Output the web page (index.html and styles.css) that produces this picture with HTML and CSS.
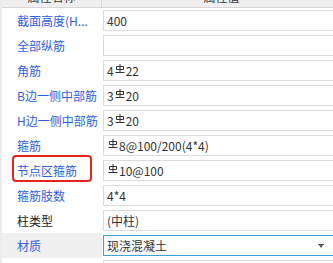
FILE: index.html
```html
<!DOCTYPE html>
<html>
<head>
  <title>柱属性</title>
  <link rel="stylesheet" href="styles.css">
</head>
<body>
  <div class="grid">
    <!-- header row, scrolled mostly out of view -->
    <div class="head">
      <div class="head-cell">属性名称</div>
      <div class="head-cell">属性值</div>
    </div>

    <div class="row">
      <div class="label">截面高度(H...</div>
      <div class="value"><div class="box">400</div></div>
    </div>
    <div class="row">
      <div class="label">全部纵筋</div>
      <div class="value"><div class="box"></div></div>
    </div>
    <div class="row">
      <div class="label">角筋</div>
      <div class="value"><div class="box">4<svg class="bar" viewBox="0 0 10 10"><path d="M5 0V8M1.5 2.5H8.5V5.5H1.5ZM0.5 8.5H9.5"/></svg>22</div></div>
    </div>
    <div class="row">
      <div class="label">B边一侧中部筋</div>
      <div class="value"><div class="box">3<svg class="bar" viewBox="0 0 10 10"><path d="M5 0V8M1.5 2.5H8.5V5.5H1.5ZM0.5 8.5H9.5"/></svg>20</div></div>
    </div>
    <div class="row">
      <div class="label">H边一侧中部筋</div>
      <div class="value"><div class="box">3<svg class="bar" viewBox="0 0 10 10"><path d="M5 0V8M1.5 2.5H8.5V5.5H1.5ZM0.5 8.5H9.5"/></svg>20</div></div>
    </div>
    <div class="row">
      <div class="label">箍筋</div>
      <div class="value"><div class="box"><svg class="bar" viewBox="0 0 10 10"><path d="M5 0V8M1.5 2.5H8.5V5.5H1.5ZM0.5 8.5H9.5"/></svg>8@100/200(4*4)</div></div>
    </div>
    <div class="row">
      <div class="label marked">节点区箍筋</div>
      <div class="value"><div class="box"><svg class="bar" viewBox="0 0 10 10"><path d="M5 0V8M1.5 2.5H8.5V5.5H1.5ZM0.5 8.5H9.5"/></svg>10@100</div></div>
    </div>
    <div class="row">
      <div class="label">箍筋肢数</div>
      <div class="value"><div class="box">4*4</div></div>
    </div>
    <div class="row">
      <div class="label plain">柱类型</div>
      <div class="value"><div class="box">(中柱)</div></div>
    </div>
    <div class="row selected">
      <div class="label">材质</div>
      <div class="value">
        <div class="box select">
          <span>现浇混凝土</span>
          <svg class="arrow" viewBox="0 0 6 4"><path d="M0 0H6V1H5L3 4L1 1H0Z"/></svg>
        </div>
      </div>
    </div>
    <div class="row">
      <div class="label"></div>
      <div class="value"><div class="box"></div></div>
    </div>
  </div>
</body>
</html>
```

FILE: styles.css
```css
/* page */
body {
  margin: 0;
  overflow: hidden;
  background: #fff;
  font-family: "Noto Sans CJK SC", "Noto Sans", sans-serif;
  font-size: 12px;
  color: #333;
}

/* property grid */
.grid {
  width: calc(100% + 6px);
  border-left: 2px solid #ececec;
}
.head, .row {
  display: grid;
  grid-template-columns: 100px 1fr;
}
.head {
  margin-top: -14px;
  height: 22px;
  box-sizing: border-box;
  background: #efefef;
  border-bottom: 1px solid #d6d6d6;
}
.head-cell {
  display: flex;
  align-items: center;
  justify-content: center;
  color: #333;
}
.head-cell:first-child { border-right: 1px solid #d9d9d9; }

.row { height: 25px; }
.label {
  position: relative;
  display: flex;
  align-items: center;
  padding-left: 15px;
  color: #2f5fe2;
  white-space: nowrap;
}
.label.plain { color: #222; }
.selected .label { background: #f0f0f0; }

/* red annotation around one label */
.marked::after {
  content: "";
  position: absolute;
  left: 10px;
  top: -3px;
  width: 80px;
  height: 27px;
  box-sizing: border-box;
  border: 2px solid #e8261f;
  border-radius: 4px;
}

.value { padding: 2px 0 2px 1px; }
.box {
  height: 21px;
  box-sizing: border-box;
  border: 1px solid #dcdcdc;
  background: #fff;
  display: flex;
  align-items: center;
  padding-left: 3px;
  color: #333;
  white-space: nowrap;
}
.box.select {
  border-color: #3fa2d6;
  justify-content: space-between;
  padding-right: 16px;
}

/* rebar grade symbol */
.bar {
  width: 10px;
  height: 10px;
  margin: 0 1px;
  position: relative;
  top: -2px;
  fill: none;
  stroke: #333;
  stroke-width: 1;
}
.arrow {
  width: 6px;
  height: 4px;
  fill: #555;
}
```
